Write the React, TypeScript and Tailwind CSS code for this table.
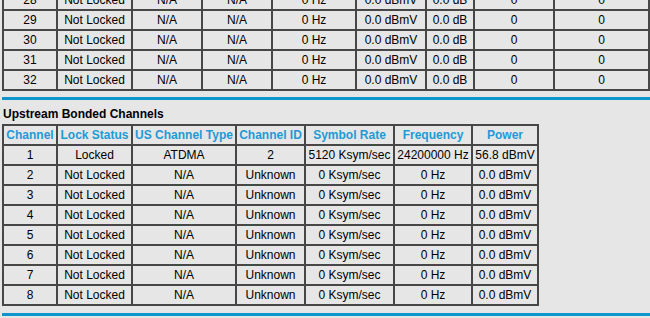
import React from "react";

const topWidths = [54, 75, 70, 70, 84, 70, 48, 80, 95];
const upWidths = [54, 75, 104, 69, 89, 78, 66];

const topRows = [28, 29, 30, 31, 32].map((n) => [
  String(n),
  "Not Locked",
  "N/A",
  "N/A",
  "0 Hz",
  "0.0 dBmV",
  "0.0 dB",
  "0",
  "0",
]);

const upHeader = [
  "Channel",
  "Lock Status",
  "US Channel Type",
  "Channel ID",
  "Symbol Rate",
  "Frequency",
  "Power",
];

const upRows: string[][] = [
  ["1", "Locked", "ATDMA", "2", "5120 Ksym/sec", "24200000 Hz", "56.8 dBmV"],
  ...[2, 3, 4, 5, 6, 7, 8].map((n) => [
    String(n),
    "Not Locked",
    "N/A",
    "Unknown",
    "0 Ksym/sec",
    "0 Hz",
    "0.0 dBmV",
  ]),
];

const cell =
  "h-[20px] border border-[#474747] px-0 py-0 text-center align-middle leading-[14px] whitespace-nowrap overflow-hidden";

export default function App() {
  return (
    <div
      className="min-h-screen bg-[#e6e6e6] pl-[2px] text-[12px] text-black overflow-hidden"
      style={{ fontFamily: '"Liberation Sans", Arial, sans-serif' }}
    >
      <table
        className="table-fixed border-separate border-spacing-0 border border-[#474747] mt-[-11px] w-[648px]"
      >
        <colgroup>
          {topWidths.map((w, i) => (
            <col key={i} style={{ width: w }} />
          ))}
        </colgroup>
        <tbody>
          {topRows.map((r, i) => (
            <tr key={i}>
              {r.map((c, j) => (
                <td key={j} className={cell}>
                  {c}
                </td>
              ))}
            </tr>
          ))}
        </tbody>
      </table>

      <div className="mt-[6px] h-[3px] bg-[#0c96cb]" />

      <div className="mt-[7px] pl-[1px] font-bold leading-[14px]">Upstream Bonded Channels</div>

      <table className="mt-[3px] table-fixed border-separate border-spacing-0 border border-[#474747] w-[537px]">
        <colgroup>
          {upWidths.map((w, i) => (
            <col key={i} style={{ width: w }} />
          ))}
        </colgroup>
        <thead>
          <tr>
            {upHeader.map((h, j) => (
              <th key={j} className={cell + " font-bold text-[#1e9ad6]"}>
                {h}
              </th>
            ))}
          </tr>
        </thead>
        <tbody>
          {upRows.map((r, i) => (
            <tr key={i}>
              {r.map((c, j) => (
                <td key={j} className={cell}>
                  {c}
                </td>
              ))}
            </tr>
          ))}
        </tbody>
      </table>

      <div className="mt-[7px] h-[3px] bg-[#0c96cb]" />
    </div>
  );
}
